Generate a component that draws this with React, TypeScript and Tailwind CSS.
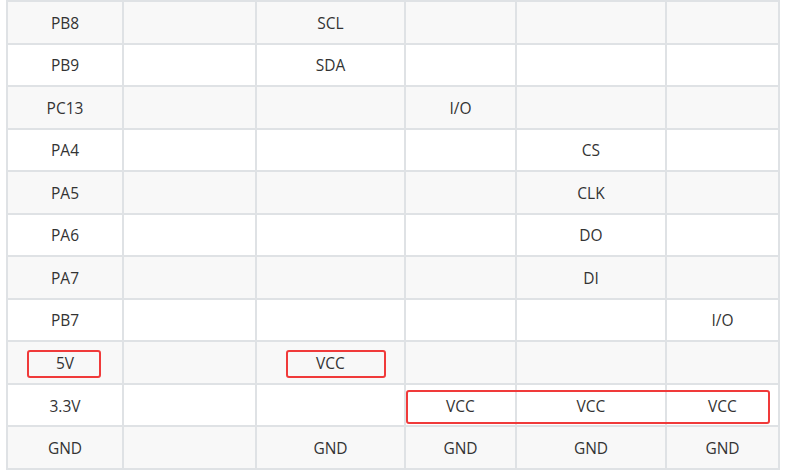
const rows: string[][] = [
    ['PB8', '', 'SCL', '', '', ''],
    ['PB9', '', 'SDA', '', '', ''],
    ['PC13', '', '', 'I/O', '', ''],
    ['PA4', '', '', '', 'CS', ''],
    ['PA5', '', '', '', 'CLK', ''],
    ['PA6', '', '', '', 'DO', ''],
    ['PA7', '', '', '', 'DI', ''],
    ['PB7', '', '', '', '', 'I/O'],
    ['5V', '', 'VCC', '', '', ''],
    ['3.3V', '', '', 'VCC', 'VCC', 'VCC'],
    ['GND', '', 'GND', 'GND', 'GND', 'GND'],
];

export default function App() {
    return (
        <div className="relative w-[785px] h-[475px] bg-white font-['Open_Sans',sans-serif] text-[15.5px] text-[#333]">
            <div className="ml-[6px] w-[774px] h-[470px] p-[2px] gap-[2px] bg-[#dfe2e5] grid grid-cols-[114px_131px_147px_109px_148px_111px] grid-rows-[repeat(11,minmax(0,1fr))]">
                {rows.map((row, i) =>
                    row.map((cell, j) => (
                        <div
                            key={`${i}-${j}`}
                            className={`flex items-center justify-center pt-[2px] ${i % 2 === 0 ? 'bg-[#f8f8f8]' : 'bg-white'}`}
                        >
                            {cell}
                        </div>
                    ))
                )}
            </div>

            {/* 赤枠 */}
            <div className="absolute left-[27px] top-[350px] w-[74px] h-[28px] border-2 border-[#f03a3a] rounded-[3px]" />
            <div className="absolute left-[286px] top-[350px] w-[100px] h-[28px] border-2 border-[#f03a3a] rounded-[3px]" />
            <div className="absolute left-[406px] top-[390px] w-[364px] h-[34px] border-2 border-[#f03a3a] rounded-[3px]" />
        </div>
    );
}
